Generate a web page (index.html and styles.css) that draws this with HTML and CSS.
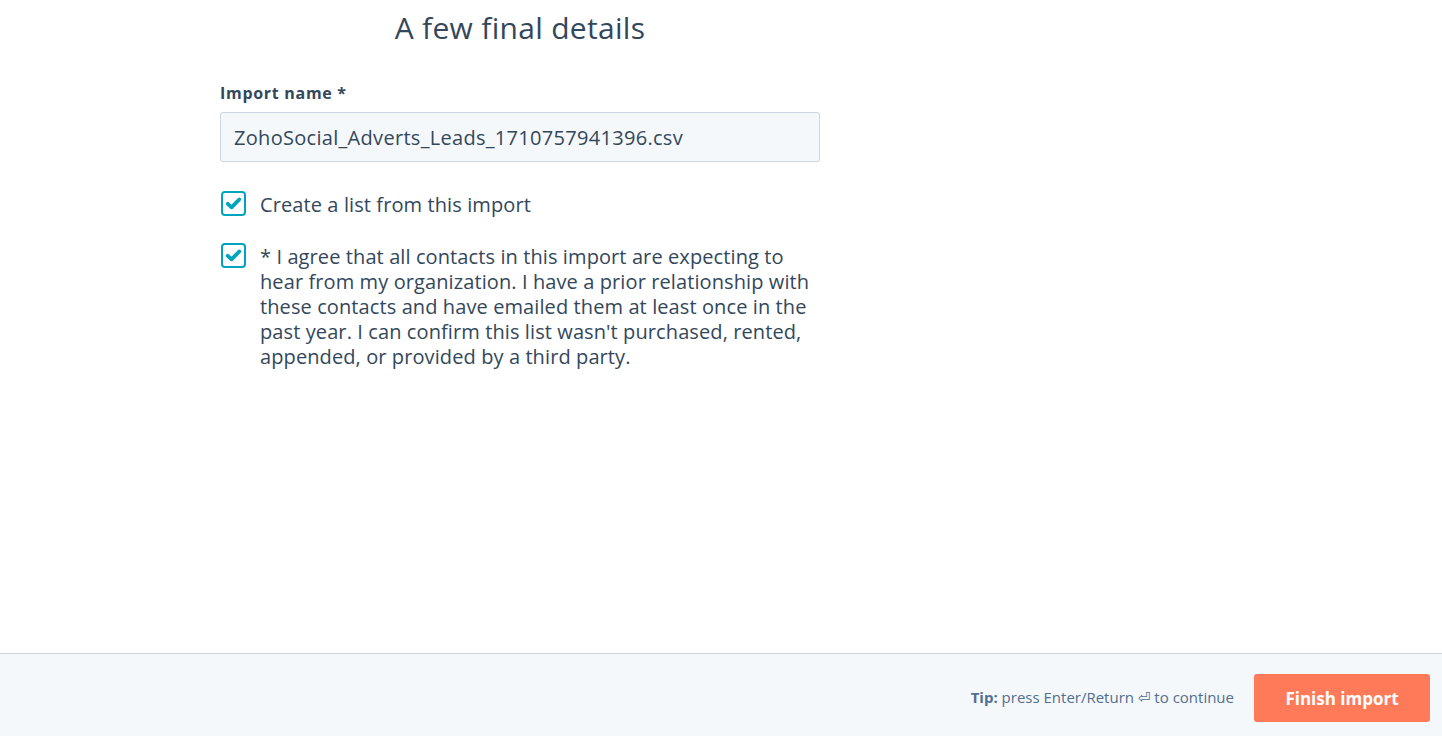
FILE: index.html
```html
<!DOCTYPE html>
<html lang="en">
<head>
<meta charset="utf-8">
<title>A few final details</title>
<link rel="stylesheet" href="styles.css">
</head>
<body>
<div class="page">
  <main class="content">
    <h1 class="title">A few final details</h1>
    <div class="field">
      <label class="label" for="import-name">Import name *</label>
      <div class="input" id="import-name">ZohoSocial_Adverts_Leads_1710757941396.csv</div>
    </div>
    <div class="check-row">
      <span class="checkbox"><svg viewBox="0 0 16 16" width="17" height="17"><path d="M2.6 8.3 L6.2 11.6 L13.4 4.2" fill="none" stroke="#00a4bd" stroke-width="3.6" stroke-linecap="round" stroke-linejoin="round"/></svg></span>
      <span class="check-text">Create a list from this import</span>
    </div>
    <div class="check-row">
      <span class="checkbox"><svg viewBox="0 0 16 16" width="17" height="17"><path d="M2.6 8.3 L6.2 11.6 L13.4 4.2" fill="none" stroke="#00a4bd" stroke-width="3.6" stroke-linecap="round" stroke-linejoin="round"/></svg></span>
      <span class="check-text">* I agree that all contacts in this import are expecting to hear from my organization. I have a prior relationship with these contacts and have emailed them at least once in the past year. I can confirm this list wasn't purchased, rented, appended, or provided by a third party.</span>
    </div>
  </main>
  <footer class="footer">
    <span class="tip"><b>Tip:</b> press Enter/Return &#x23CE; to continue</span>
    <button class="btn">Finish import</button>
  </footer>
</div>
</body>
</html>
```

FILE: styles.css
```css
* { box-sizing: border-box; }
html, body { margin: 0; padding: 0; }
body {
  font-family: "Open Sans", "DejaVu Sans", sans-serif;
  color: #33475b;
  background: #fff;
}
.page {
  height: 100vh;
  display: flex;
  flex-direction: column;
}
.content {
  flex: 1;
  width: 600px;
  margin-left: 220px;
  display: flex;
  flex-direction: column;
}
.title {
  margin: 8px 0 0;
  text-align: center;
  font-weight: 400;
  font-size: 30px;
  letter-spacing: 0.3px;
  line-height: 40px;
  color: #33475b;
}
.field {
  margin-top: 34px;
  display: flex;
  flex-direction: column;
}
.label {
  font-size: 16px;
  letter-spacing: 0.7px;
  font-weight: 700;
  line-height: 22px;
  margin-bottom: 8px;
}
.input {
  height: 50px;
  border: 1px solid #cbd6e2;
  border-radius: 3px;
  background: #f5f8fa;
  padding: 0 13px;
  display: flex;
  align-items: center;
  font-size: 20px;
  letter-spacing: 0.3px;
}
.check-row {
  display: flex;
  align-items: flex-start;
  gap: 14px;
  margin-top: 29px;
}
.check-row + .check-row { margin-top: 26px; }
.checkbox {
  flex: none;
  width: 25px;
  height: 25px;
  margin-left: 1px;
  border: 2px solid #00a4bd;
  border-radius: 4px;
  display: flex;
  align-items: center;
  justify-content: center;
}
.check-text {
  font-size: 20px;
  letter-spacing: 0.1px;
  line-height: 25px;
  margin-top: 1px;
}
.footer {
  flex: none;
  height: 83px;
  border-top: 1px solid #cbd6e2;
  background: #f5f8fa;
  display: flex;
  align-items: center;
  justify-content: flex-end;
  gap: 20px;
  padding: 0 12px 0 0;
}
.tip {
  font-size: 15px;
  color: #516f90;
  margin-top: 4px;
}
.tip b { font-weight: 700; }
.btn {
  height: 48px;
  width: 176px;
  border: none;
  border-radius: 3px;
  background: #ff7a59;
  color: #fff;
  font-family: inherit;
  font-size: 17px;
  font-weight: 700;
  margin-top: 6px;
}
```
